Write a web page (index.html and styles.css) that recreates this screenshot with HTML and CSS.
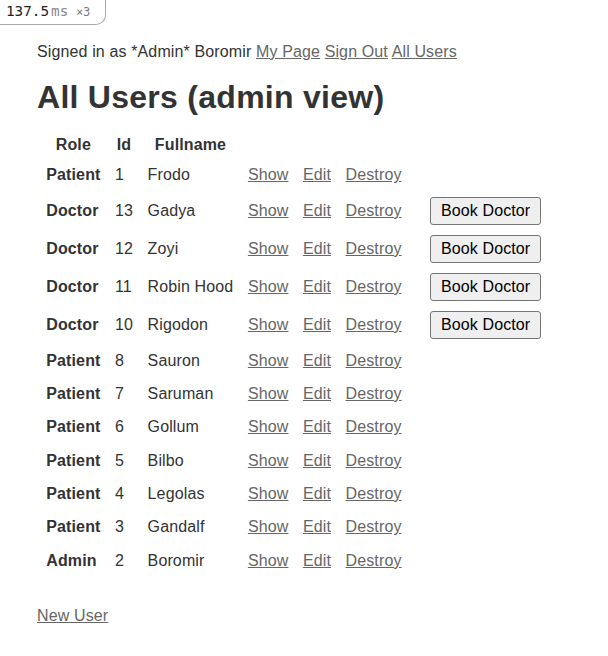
FILE: index.html
```html
<!DOCTYPE html>
<html>
<head>
<meta charset="utf-8">
<title>All Users</title>
<link rel="stylesheet" href="styles.css">
</head>
<body>
<div class="profiler"><span class="profiler-time">137.5</span><span class="profiler-unit">ms</span><span class="profiler-count">×3</span></div>
<main class="page">
  <p class="session">Signed in as *Admin* Boromir <a href="#">My Page</a> <a href="#">Sign Out</a> <a href="#">All Users</a></p>
  <h1 class="title">All Users (admin view)</h1>
  <table class="users">
    <thead>
      <tr><th>Role</th><th>Id</th><th>Fullname</th><th></th><th></th><th></th><th></th></tr>
    </thead>
    <tbody>
      <tr><td class="role">Patient</td><td>1</td><td>Frodo</td><td><a href="#">Show</a></td><td><a href="#">Edit</a></td><td><a href="#">Destroy</a></td><td></td></tr>
      <tr><td class="role">Doctor</td><td>13</td><td>Gadya</td><td><a href="#">Show</a></td><td><a href="#">Edit</a></td><td><a href="#">Destroy</a></td><td><button class="book">Book Doctor</button></td></tr>
      <tr><td class="role">Doctor</td><td>12</td><td>Zoyi</td><td><a href="#">Show</a></td><td><a href="#">Edit</a></td><td><a href="#">Destroy</a></td><td><button class="book">Book Doctor</button></td></tr>
      <tr><td class="role">Doctor</td><td>11</td><td>Robin Hood</td><td><a href="#">Show</a></td><td><a href="#">Edit</a></td><td><a href="#">Destroy</a></td><td><button class="book">Book Doctor</button></td></tr>
      <tr><td class="role">Doctor</td><td>10</td><td>Rigodon</td><td><a href="#">Show</a></td><td><a href="#">Edit</a></td><td><a href="#">Destroy</a></td><td><button class="book">Book Doctor</button></td></tr>
      <tr><td class="role">Patient</td><td>8</td><td>Sauron</td><td><a href="#">Show</a></td><td><a href="#">Edit</a></td><td><a href="#">Destroy</a></td><td></td></tr>
      <tr><td class="role">Patient</td><td>7</td><td>Saruman</td><td><a href="#">Show</a></td><td><a href="#">Edit</a></td><td><a href="#">Destroy</a></td><td></td></tr>
      <tr><td class="role">Patient</td><td>6</td><td>Gollum</td><td><a href="#">Show</a></td><td><a href="#">Edit</a></td><td><a href="#">Destroy</a></td><td></td></tr>
      <tr><td class="role">Patient</td><td>5</td><td>Bilbo</td><td><a href="#">Show</a></td><td><a href="#">Edit</a></td><td><a href="#">Destroy</a></td><td></td></tr>
      <tr><td class="role">Patient</td><td>4</td><td>Legolas</td><td><a href="#">Show</a></td><td><a href="#">Edit</a></td><td><a href="#">Destroy</a></td><td></td></tr>
      <tr><td class="role">Patient</td><td>3</td><td>Gandalf</td><td><a href="#">Show</a></td><td><a href="#">Edit</a></td><td><a href="#">Destroy</a></td><td></td></tr>
      <tr><td class="role">Admin</td><td>2</td><td>Boromir</td><td><a href="#">Show</a></td><td><a href="#">Edit</a></td><td><a href="#">Destroy</a></td><td></td></tr>
    </tbody>
  </table>
  <p class="actions"><a href="#">New User</a></p>
</main>
</body>
</html>
```
FILE: styles.css
```css
html, body {
  margin: 0;
  padding: 0;
  background: #fff;
}
body {
  font-family: "Liberation Sans", Arial, sans-serif;
  font-size: 16px;
  letter-spacing: 0.13px;
  color: #333;
}
a {
  color: #666;
  text-decoration: underline;
}
.profiler {
  position: absolute;
  top: 0;
  left: 0;
  box-sizing: border-box;
  width: 106px;
  height: 25px;
  padding: 3px 0 0 6px;
  border: 1px solid #a8a8a8;
  border-top: none;
  border-left: none;
  border-bottom-right-radius: 10px;
  background: #fff;
  font-family: "DejaVu Sans Mono", monospace;
  letter-spacing: 0;
  display: flex;
  align-items: baseline;
  white-space: nowrap;
}
.profiler-time {
  font-size: 14.3px;
  color: #222;
}
.profiler-unit {
  font-size: 14.3px;
  color: #888;
  margin-left: 2px;
}
.profiler-count {
  font-size: 11.5px;
  color: #777;
  margin-left: 8px;
}
.page {
  padding: 43px 37px 0 37px;
}
.session {
  margin: 0;
  line-height: 18.4px;
}
.title {
  margin: 18px 0 14.5px 0;
  font-size: 32px;
  line-height: 36.8px;
  letter-spacing: 0.27px;
  font-weight: bold;
  color: #333;
}
.users {
  border-collapse: separate;
  border-spacing: 2px;
  margin-left: 1px;
}
.users th {
  padding: 4px 6.25px;
  line-height: 16.67px;
  font-weight: bold;
  text-align: center;
}
.users td {
  padding: 4px 6.25px;
  line-height: 23.33px;
  vertical-align: middle;
  white-space: nowrap;
}
.users td.role {
  font-weight: bold;
}
.book {
  display: inline-block;
  vertical-align: middle;
  margin: 0 0 0 14px;
  padding: 4px 10px;
  font-family: "Liberation Sans", Arial, sans-serif;
  font-size: 16px;
  letter-spacing: 0.1px;
  line-height: 18px;
  color: #000;
  background: #efefef;
  border: 1px solid #767676;
  border-radius: 3px;
}
.actions {
  margin: 29px 0 0 0;
  line-height: 18.4px;
}
```
